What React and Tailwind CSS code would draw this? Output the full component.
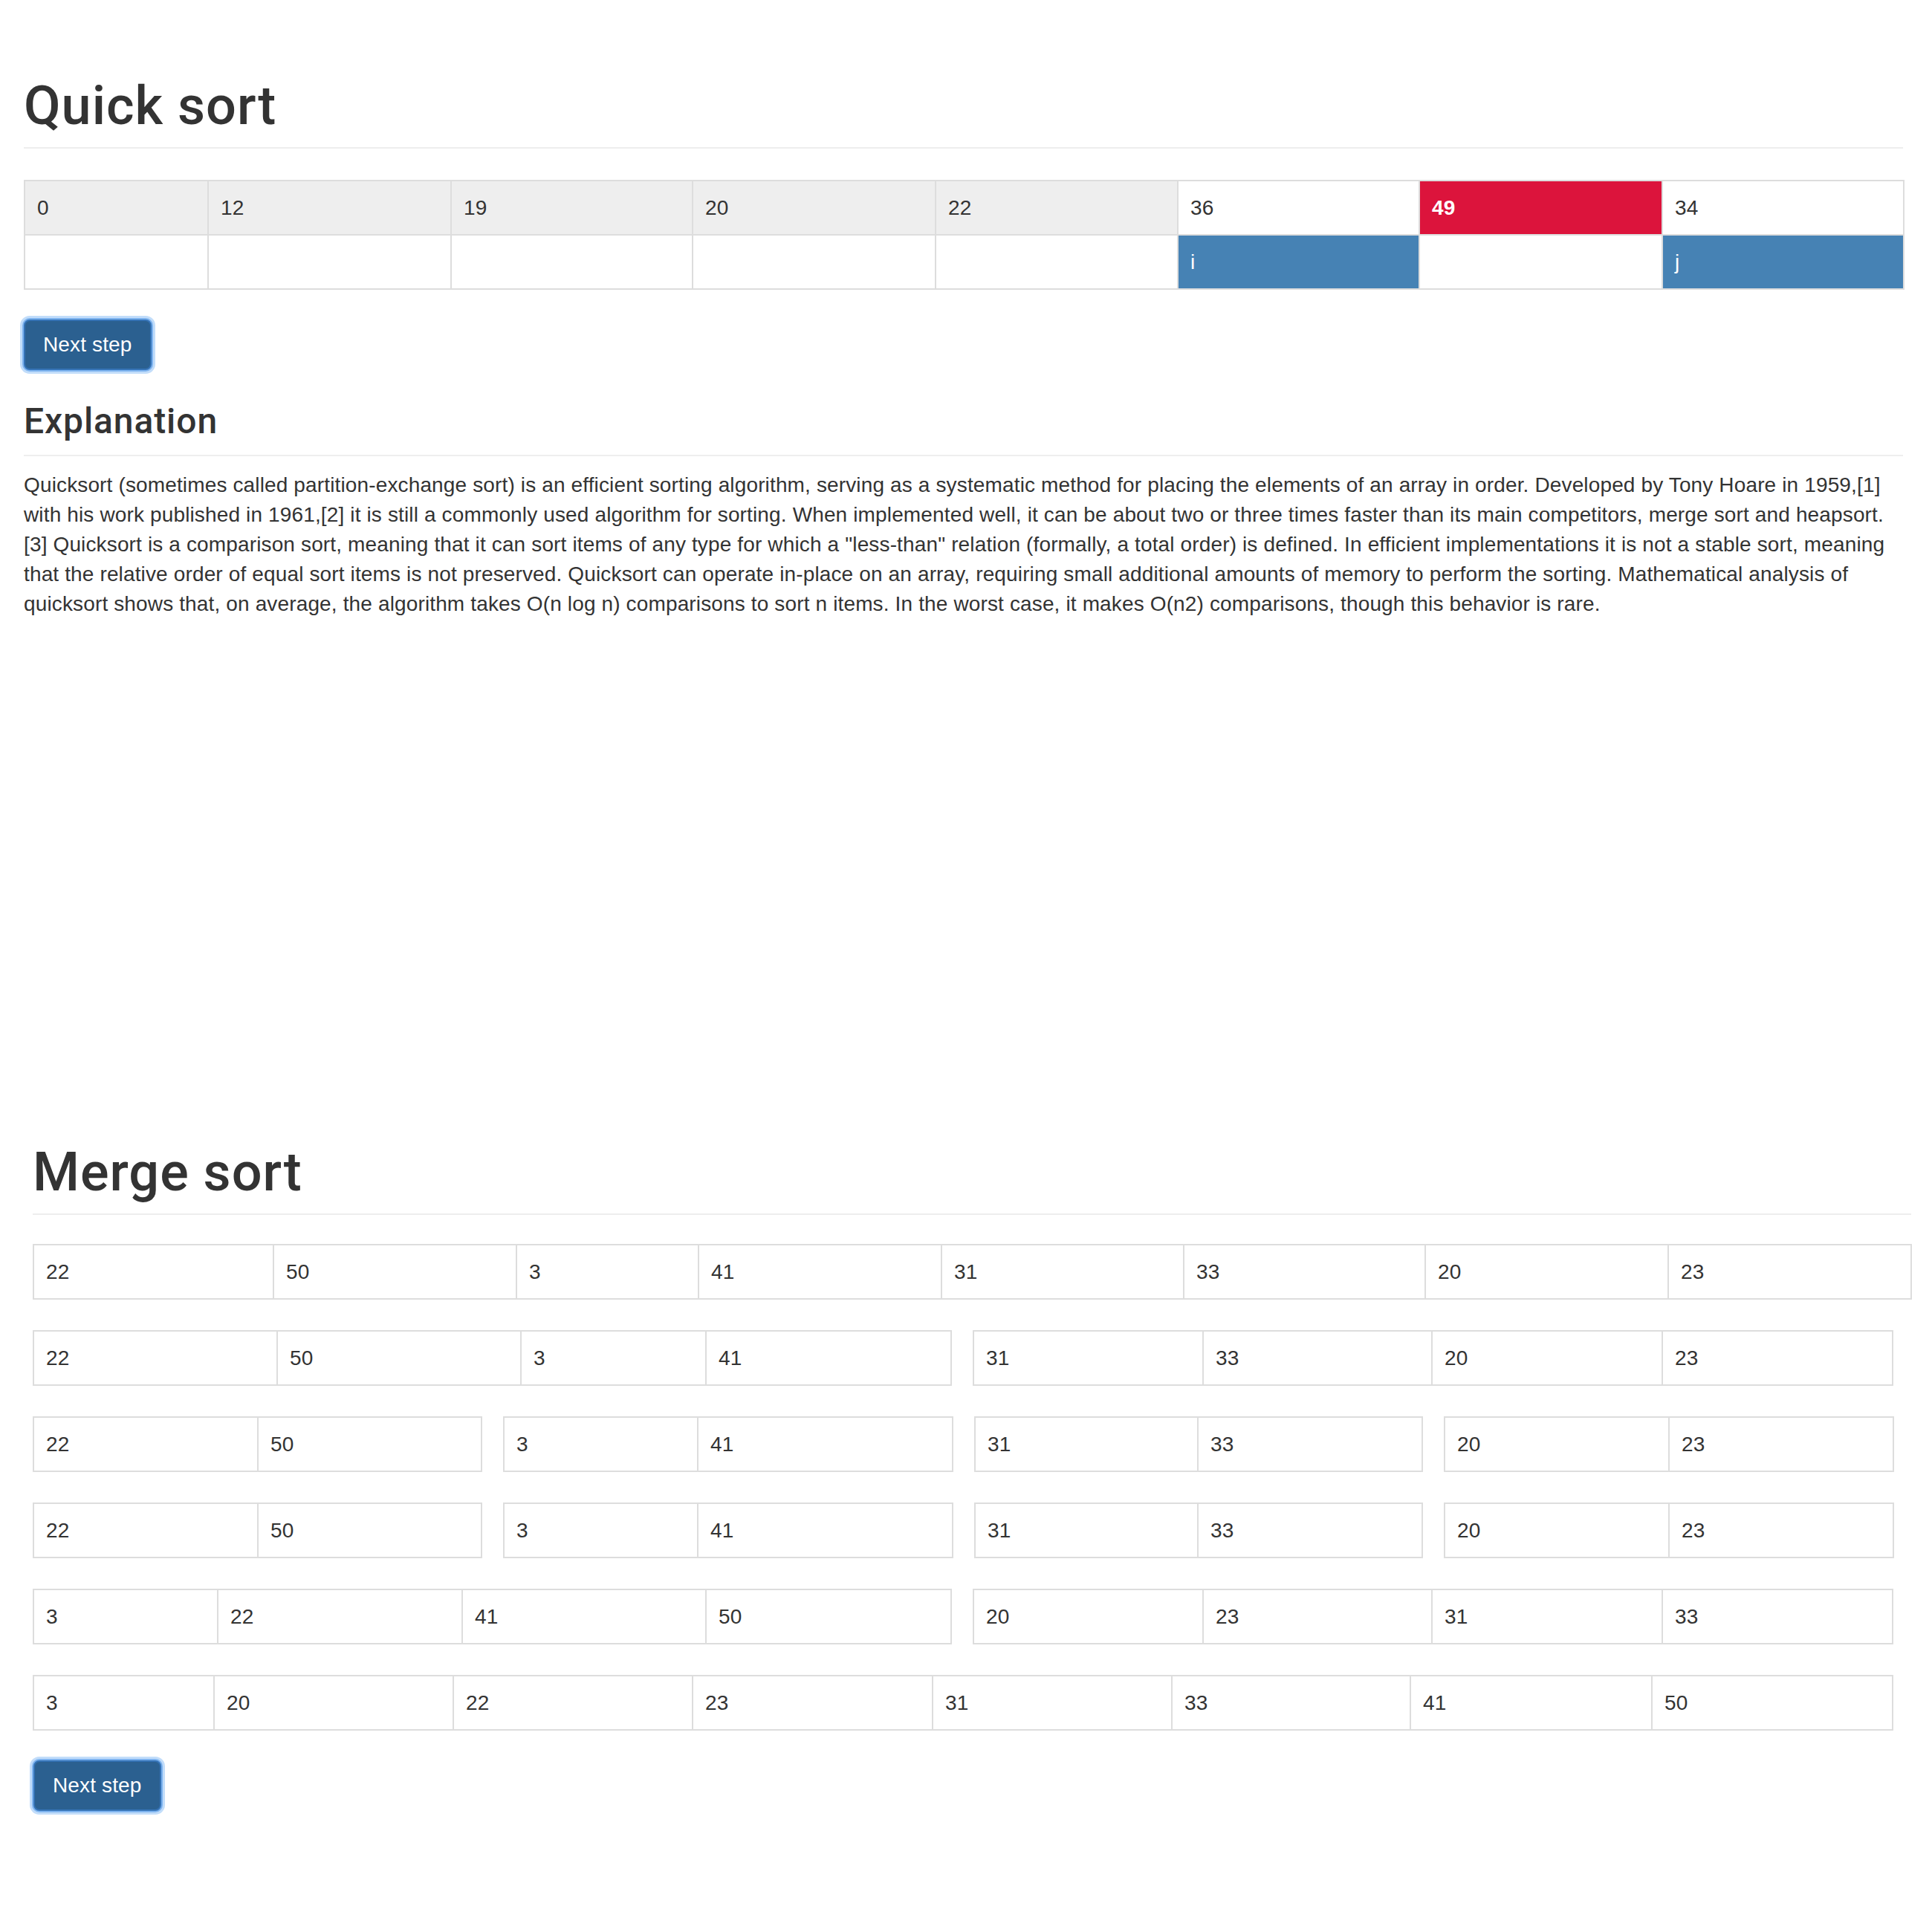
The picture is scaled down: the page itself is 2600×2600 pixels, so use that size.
import React from 'react';

const quickTop = [
  { v: '0', bg: 'bg-[#eeeeee]' },
  { v: '12', bg: 'bg-[#eeeeee]' },
  { v: '19', bg: 'bg-[#eeeeee]' },
  { v: '20', bg: 'bg-[#eeeeee]' },
  { v: '22', bg: 'bg-[#eeeeee]' },
  { v: '36', bg: 'bg-white' },
  { v: '49', bg: 'bg-[#dc143c] text-white font-bold' },
  { v: '34', bg: 'bg-white' },
];

const quickBottom = [
  { v: '', bg: 'bg-white' },
  { v: '', bg: 'bg-white' },
  { v: '', bg: 'bg-white' },
  { v: '', bg: 'bg-white' },
  { v: '', bg: 'bg-white' },
  { v: 'i', bg: 'bg-[#4682b4] text-white' },
  { v: '', bg: 'bg-white' },
  { v: 'j', bg: 'bg-[#4682b4] text-white' },
];

const quickCols = [247, 327, 325, 327, 326, 325, 327, 325];

// each merge row: list of tables, each with column widths and values
const mergeRows = [
  [{ cols: [323, 327, 245, 327, 326, 325, 327, 327], values: [22, 50, 3, 41, 31, 33, 20, 23] }],
  [
    { cols: [328, 328, 249, 330], values: [22, 50, 3, 41] },
    { cols: [309, 308, 310, 310], values: [31, 33, 20, 23] },
  ],
  [
    { cols: [302, 301], values: [22, 50] },
    { cols: [261, 343], values: [3, 41] },
    { cols: [300, 302], values: [31, 33] },
    { cols: [302, 302], values: [20, 23] },
  ],
  [
    { cols: [302, 301], values: [22, 50] },
    { cols: [261, 343], values: [3, 41] },
    { cols: [300, 302], values: [31, 33] },
    { cols: [302, 302], values: [20, 23] },
  ],
  [
    { cols: [248, 329, 328, 330], values: [3, 22, 41, 50] },
    { cols: [309, 308, 310, 310], values: [20, 23, 31, 33] },
  ],
  [{ cols: [243, 322, 322, 323, 322, 321, 325, 324], values: [3, 20, 22, 23, 31, 33, 41, 50] }],
];

const explanation = [
  'Quicksort (sometimes called partition-exchange sort) is an efficient sorting algorithm, serving as a systematic method for placing the elements of an array in order. Developed by Tony Hoare in 1959,[1]',
  'with his work published in 1961,[2] it is still a commonly used algorithm for sorting. When implemented well, it can be about two or three times faster than its main competitors, merge sort and heapsort.',
  '[3] Quicksort is a comparison sort, meaning that it can sort items of any type for which a "less-than" relation (formally, a total order) is defined. In efficient implementations it is not a stable sort, meaning',
  'that the relative order of equal sort items is not preserved. Quicksort can operate in-place on an array, requiring small additional amounts of memory to perform the sorting. Mathematical analysis of',
  'quicksort shows that, on average, the algorithm takes O(n log n) comparisons to sort n items. In the worst case, it makes O(n2) comparisons, though this behavior is rare.',
];

const sum = (arr) => arr.reduce((a, b) => a + b, 0);

const cellClass = 'border-2 border-[#dddddd] px-[16px] pt-[16px] pb-[15px] leading-[40px] text-left align-top';
const headingFont = "font-['Roboto','Liberation_Sans',Arial,sans-serif] font-medium";

const NextStep = () => (
  <button className="block rounded-[8px] border-2 border-[#3573b6] bg-[#2b6090] px-[24px] py-[12px] text-[28px] leading-[40px] text-white shadow-[0_0_0_2px_#7db3ef,0_0_0_5px_#c2ddfa]">
    Next step
  </button>
);

const ArrayTable = ({ cols, rows }) => (
  <table className="table-fixed border-collapse border-2 border-[#dddddd]" style={{ width: sum(cols) }}>
    <colgroup>
      {cols.map((w, i) => (
        <col key={i} style={{ width: w }} />
      ))}
    </colgroup>
    <tbody>
      {rows.map((row, r) => (
        <tr key={r}>
          {row.map((cell, c) => (
            <td key={c} className={`${cellClass} ${cell.bg || 'bg-white'}`}>
              {cell.v}
            </td>
          ))}
        </tr>
      ))}
    </tbody>
  </table>
);

export default function App() {
  return (
    <div className="w-[2600px] min-h-[2600px] bg-white text-[#333333] text-[28px] leading-[40px] tracking-[0.14px] font-['Liberation_Sans',Arial,Helvetica,sans-serif]">
      {/* Quick sort */}
      <section className="w-[2529px] ml-[32px] pt-[103px]">
        <h1 className={`${headingFont} text-[72px] leading-[79px] tracking-[1px] pb-[16px] border-b-2 border-[#eeeeee]`}>Quick sort</h1>
        <div className="mt-[42px]">
          <ArrayTable cols={quickCols} rows={[quickTop, quickBottom]} />
        </div>
        <div className="mt-[40px]">
          <NextStep />
        </div>
        <h3 className={`${headingFont} mt-[42px] text-[48px] leading-[53px] tracking-[0.9px] pb-[19px] border-b-2 border-[#eeeeee]`}>Explanation</h3>
        <p className="mt-[19px]">
          {explanation.map((line, i) => (
            <span key={i} className="block whitespace-nowrap">
              {line}
            </span>
          ))}
        </p>
      </section>

      {/* Merge sort */}
      <section className="w-[2528px] ml-[44px] mt-[705px] pb-[100px]">
        <h1 className={`${headingFont} text-[72px] leading-[79px] tracking-[1px] pb-[16px] border-b-2 border-[#eeeeee]`}>Merge sort</h1>
        <div className="mt-[39px] flex flex-col gap-[41px]">
          {mergeRows.map((tables, r) => (
            <div key={r} className="flex gap-[28px]">
              {tables.map((t, i) => (
                <ArrayTable key={i} cols={t.cols} rows={[t.values.map((v) => ({ v }))]} />
              ))}
            </div>
          ))}
        </div>
        <div className="mt-[40px] ml-px">
          <NextStep />
        </div>
      </section>
    </div>
  );
}
